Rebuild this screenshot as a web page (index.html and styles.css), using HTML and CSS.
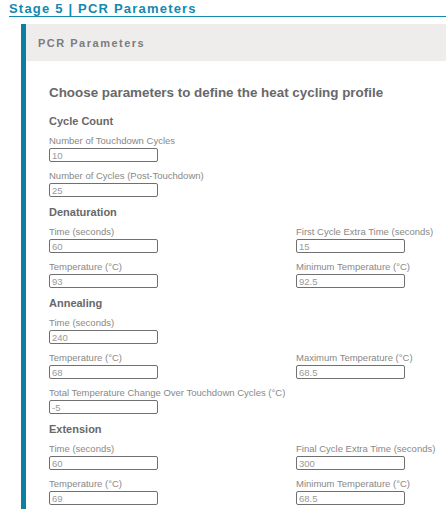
FILE: index.html
```html
<!DOCTYPE html>
<html lang="en">
<head>
  <meta charset="UTF-8" />
  <meta name="viewport" content="width=device-width, initial-scale=1.0" />
  <title>Stage 5 | PCR Parameters</title>
  <link rel="stylesheet" href="styles.css">
</head>
<body>
  <!-- Stage title -->
  <h1 class="stage-title">Stage 5 | PCR Parameters</h1>

  <div class="panel">
    <div class="panel-header">PCR Parameters</div>

    <div class="panel-body">
      <h2 class="intro">Choose parameters to define the heat cycling profile</h2>

      <!-- Cycle count -->
      <h3 class="section-title">Cycle Count</h3>
      <div class="field-grid">
        <div class="field field-wide">
          <label for="touchdown-cycles">Number of Touchdown Cycles</label>
          <input id="touchdown-cycles" type="text" value="10" />
        </div>
        <div class="field field-wide">
          <label for="post-cycles">Number of Cycles (Post-Touchdown)</label>
          <input id="post-cycles" type="text" value="25" />
        </div>
      </div>

      <!-- Denaturation -->
      <h3 class="section-title">Denaturation</h3>
      <div class="field-grid">
        <div class="field">
          <label for="den-time">Time (seconds)</label>
          <input id="den-time" type="text" value="60" />
        </div>
        <div class="field">
          <label for="den-extra">First Cycle Extra Time (seconds)</label>
          <input id="den-extra" type="text" value="15" />
        </div>
        <div class="field">
          <label for="den-temp">Temperature (°C)</label>
          <input id="den-temp" type="text" value="93" />
        </div>
        <div class="field">
          <label for="den-min">Minimum Temperature (°C)</label>
          <input id="den-min" type="text" value="92.5" />
        </div>
      </div>

      <!-- Annealing -->
      <h3 class="section-title">Annealing</h3>
      <div class="field-grid">
        <div class="field field-wide">
          <label for="ann-time">Time (seconds)</label>
          <input id="ann-time" type="text" value="240" />
        </div>
        <div class="field">
          <label for="ann-temp">Temperature (°C)</label>
          <input id="ann-temp" type="text" value="68" />
        </div>
        <div class="field">
          <label for="ann-max">Maximum Temperature (°C)</label>
          <input id="ann-max" type="text" value="68.5" />
        </div>
        <div class="field field-wide">
          <label for="ann-change">Total Temperature Change Over Touchdown Cycles (°C)</label>
          <input id="ann-change" type="text" value="-5" />
        </div>
      </div>

      <!-- Extension -->
      <h3 class="section-title">Extension</h3>
      <div class="field-grid">
        <div class="field">
          <label for="ext-time">Time (seconds)</label>
          <input id="ext-time" type="text" value="60" />
        </div>
        <div class="field">
          <label for="ext-final">Final Cycle Extra Time (seconds)</label>
          <input id="ext-final" type="text" value="300" />
        </div>
        <div class="field">
          <label for="ext-temp">Temperature (°C)</label>
          <input id="ext-temp" type="text" value="69" />
        </div>
        <div class="field">
          <label for="ext-min">Minimum Temperature (°C)</label>
          <input id="ext-min" type="text" value="68.5" />
        </div>
      </div>
    </div>
  </div>
</body>
</html>
```

FILE: styles.css
```css
/* Colours and type */
:root {
  --teal: #1189b0;
  --teal-dark: #0c7fa2;
  --header-bg: #eeedec;
  --text-strong: #686868;
  --text-label: #888888;
  --text-input: #999999;
  --input-border: #707070;
}

* {
  box-sizing: border-box;
}
body {
  margin: 0;
  height: 100vh;
  font-family: "Liberation Sans", Arial, sans-serif;
  background: #ffffff;
  overflow: hidden;
}

/* Stage title with underline */
.stage-title {
  margin: 0 0 0 9px;
  padding-top: 2px;
  font-size: 13px;
  line-height: 14px;
  height: 17px;
  font-weight: 700;
  letter-spacing: 1.2px;
  color: var(--teal);
  border-bottom: 1px solid var(--teal);
}

/* Panel with left accent bar */
.panel {
  margin: 7px 0 0 21px;
  border-left: 5px solid var(--teal-dark);
  height: calc(100vh - 24px);
  overflow: hidden;
}
.panel-header {
  height: 37px;
  display: flex;
  align-items: center;
  padding-left: 12px;
  background-color: var(--header-bg);
  font-size: 11px;
  font-weight: 700;
  letter-spacing: 1.5px;
  color: #7c7c7c;
}
.panel-body {
  padding: 24px 0 0 23px;
}

.intro {
  margin: 0 0 13px;
  font-size: 13.4px;
  line-height: 16px;
  font-weight: 700;
  color: var(--text-strong);
}

.section-title {
  margin: 0 0 7px;
  font-size: 11px;
  line-height: 14px;
  font-weight: 700;
  color: var(--text-strong);
}

/* Two column form grid */
.field-grid {
  display: grid;
  grid-template-columns: 247px 1fr;
  row-gap: 8px;
  margin-bottom: 8px;
}
.field {
  display: flex;
  flex-direction: column;
}
.field-wide {
  grid-column: 1 / span 2;
}
.field label {
  font-size: 9.5px;
  line-height: 12px;
  margin-bottom: 1px;
  color: var(--text-label);
  white-space: nowrap;
}
.field input {
  width: 109px;
  height: 14px;
  padding: 0 2px;
  font-family: inherit;
  font-size: 9.5px;
  color: var(--text-input);
  border: 1px solid var(--input-border);
  border-radius: 2px;
  background: #fff;
  outline: none;
}
```
